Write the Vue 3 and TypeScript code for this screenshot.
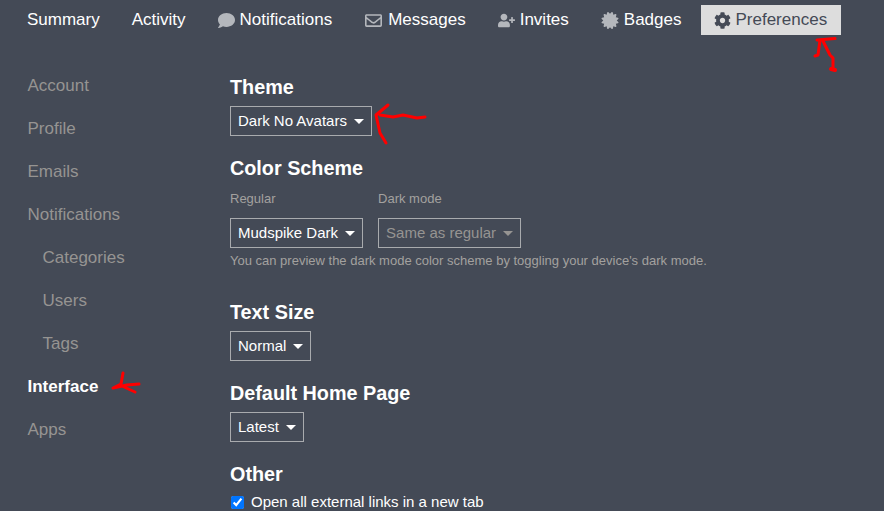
<script setup lang="ts">
interface NavItem {
  label: string;
  icon?: { box: string; width: number; d: string };
  active?: boolean;
}

const navItems: NavItem[] = [
  { label: "Summary" },
  { label: "Activity" },
  {
    label: "Notifications",
    icon: {
      box: "0 0 512 512",
      width: 17,
      d: "M256 32C114.6 32 0 125.1 0 240c0 49.6 21.4 95 57 130.7C44.5 421.1 2.7 466 2.2 466.5c-2.2 2.3-2.8 5.7-1.5 8.7S4.8 480 8 480c66.3 0 116-31.8 140.6-51.4 32.7 12.3 69 19.4 107.4 19.4 141.4 0 256-93.1 256-208S397.4 32 256 32z",
    },
  },
  {
    label: "Messages",
    icon: {
      box: "0 0 512 512",
      width: 19,
      d: "M464 64H48C21.49 64 0 85.49 0 112v288c0 26.51 21.49 48 48 48h416c26.51 0 48-21.49 48-48V112c0-26.51-21.49-48-48-48zm0 48v40.805c-22.422 18.259-58.168 46.651-134.587 106.49-16.841 13.247-50.201 45.072-73.413 44.701-23.208.375-56.579-31.459-73.413-44.701C106.18 199.465 70.425 171.067 48 152.805V112h416zM48 400V214.398c22.914 18.251 55.409 43.862 104.938 82.646 21.857 17.205 60.134 55.186 103.062 54.955 42.717.231 80.509-37.199 103.053-54.947 49.528-38.783 82.032-64.401 104.947-82.653V400H48z",
    },
  },
  {
    label: "Invites",
    icon: {
      box: "0 0 640 512",
      width: 17,
      d: "M624 208h-64v-64c0-8.8-7.2-16-16-16h-32c-8.8 0-16 7.2-16 16v64h-64c-8.8 0-16 7.2-16 16v32c0 8.8 7.2 16 16 16h64v64c0 8.8 7.2 16 16 16h32c8.8 0 16-7.2 16-16v-64h64c8.8 0 16-7.2 16-16v-32c0-8.8-7.2-16-16-16zm-400 48c70.7 0 128-57.3 128-128S294.7 0 224 0 96 57.3 96 128s57.3 128 128 128zm89.6 32h-16.7c-22.2 10.2-46.9 16-72.9 16s-50.6-5.8-72.9-16h-16.7C60.2 288 0 348.2 0 422.4V464c0 26.5 21.5 48 48 48h352c26.5 0 48-21.5 48-48v-41.6c0-74.2-60.2-134.4-134.4-134.4z",
    },
  },
  {
    label: "Badges",
    icon: {
      box: "0 0 512 512",
      width: 18,
      d: "M458.622 255.92l45.985-45.005c13.708-12.977 7.316-36.039-10.664-40.339l-62.65-15.99 17.661-62.015c4.991-17.838-11.829-34.663-29.661-29.671l-61.994 17.667-15.984-62.671C337.085.197 313.765-6.276 300.99 7.228L256 53.57 211.011 7.229c-12.63-13.351-36.047-7.234-40.325 10.668l-15.984 62.671-61.995-17.667C74.87 57.907 58.056 74.738 63.046 92.572l17.661 62.015-62.65 15.99C.069 174.878-6.31 197.944 7.392 210.915l45.985 45.005-45.985 45.004c-13.708 12.977-7.316 36.039 10.664 40.339l62.65 15.99-17.661 62.015c-4.991 17.838 11.829 34.663 29.661 29.671l61.994-17.667 15.984 62.671c4.439 18.575 27.696 24.018 40.325 10.668L256 458.61l44.989 46.001c12.5 13.488 35.987 7.486 40.325-10.668l15.984-62.671 61.994 17.667c17.836 4.994 34.651-11.837 29.661-29.671l-17.661-62.015 62.65-15.99c17.987-4.302 24.366-27.367 10.664-40.339l-45.984-45.004z",
    },
  },
  {
    label: "Preferences",
    active: true,
    icon: {
      box: "0 0 512 512",
      width: 17,
      d: "M487.4 315.7l-42.6-24.6c4.3-23.2 4.3-47 0-70.2l42.6-24.6c4.9-2.8 7.1-8.6 5.5-14-11.1-35.6-30-67.8-54.7-94.6-3.8-4.1-10-5.1-14.8-2.3L380.8 110c-17.9-15.4-38.5-27.3-60.8-35.1V25.8c0-5.6-3.9-10.5-9.4-11.7-36.7-8.2-74.3-7.8-109.2 0-5.5 1.2-9.4 6.1-9.4 11.7V75c-22.2 7.9-42.8 19.8-60.8 35.1L88.7 85.5c-4.9-2.8-11-1.9-14.8 2.3-24.7 26.7-43.6 58.9-54.7 94.6-1.7 5.4.6 11.2 5.5 14L67.3 221c-4.3 23.2-4.3 47 0 70.2l-42.6 24.6c-4.9 2.8-7.1 8.6-5.5 14 11.1 35.6 30 67.8 54.7 94.6 3.8 4.1 10 5.1 14.8 2.3l42.6-24.6c17.9 15.4 38.5 27.3 60.8 35.1v49.2c0 5.6 3.9 10.5 9.4 11.7 36.7 8.2 74.3 7.8 109.2 0 5.5-1.2 9.4-6.1 9.4-11.7v-49.2c22.2-7.9 42.8-19.8 60.8-35.1l42.6 24.6c4.9 2.8 11 1.9 14.8-2.3 24.7-26.7 43.6-58.9 54.7-94.6 1.5-5.5-.7-11.3-5.6-14.1zM256 336c-44.1 0-80-35.9-80-80s35.9-80 80-80 80 35.9 80 80-35.9 80-80 80z",
    },
  },
];

const sideItems = [
  { label: "Account" },
  { label: "Profile" },
  { label: "Emails" },
  { label: "Notifications" },
  { label: "Categories", sub: true },
  { label: "Users", sub: true },
  { label: "Tags", sub: true },
  { label: "Interface", active: true },
  { label: "Apps" },
];
</script>

<template>
  <div class="page">
    <nav class="nav">
      <a
        v-for="item in navItems"
        :key="item.label"
        class="nav-item"
        :class="{ active: item.active }"
      >
        <svg
          v-if="item.icon"
          class="nav-icon"
          :viewBox="item.icon.box"
          :width="item.icon.width"
          height="17"
        >
          <path :d="item.icon.d" fill="currentColor" />
        </svg>
        {{ item.label }}
      </a>
    </nav>

    <div class="body">
      <aside class="side">
        <a
          v-for="item in sideItems"
          :key="item.label"
          class="side-item"
          :class="{ sub: item.sub, active: item.active }"
          >{{ item.label }}</a
        >
      </aside>

      <main class="main">
        <section class="block">
          <h2>Theme</h2>
          <div class="select">Dark No Avatars <i class="caret"></i></div>
        </section>

        <section class="block">
          <h2>Color Scheme</h2>
          <div class="schemes">
            <div>
              <div class="label">Regular</div>
              <div class="select">Mudspike Dark <i class="caret"></i></div>
            </div>
            <div>
              <div class="label">Dark mode</div>
              <div class="select muted">Same as regular <i class="caret"></i></div>
            </div>
          </div>
          <p class="help">You can preview the dark mode color scheme by toggling your device's dark mode.</p>
        </section>

        <section class="block spaced">
          <h2>Text Size</h2>
          <div class="select">Normal <i class="caret"></i></div>
        </section>

        <section class="block">
          <h2>Default Home Page</h2>
          <div class="select">Latest <i class="caret"></i></div>
        </section>

        <section class="block">
          <h2>Other</h2>
          <label class="check">
            <input type="checkbox" checked />
            Open all external links in a new tab
          </label>
        </section>
      </main>
    </div>

    <!-- hand drawn red marks on top of the screenshot -->
    <svg class="marks" width="884" height="511" viewBox="0 0 884 511">
      <g fill="none" stroke="#f00" stroke-width="3" stroke-linecap="round" stroke-linejoin="round">
        <path d="M817 40L835 38.500M820 40L818 55L815 56M823 41L830 55L833 58L833 69" />
        <path d="M831 69L835 70" stroke-width="4" />
        <path d="M388 105L376 115L380 133L386 143M380 115L393 117L403 115L417 118L425 117" />
        <path d="M123 373L121 384L113 388L127 385L139 384M122 386L135 392" />
      </g>
    </svg>
  </div>
</template>

<style>
html,
body {
  background: #444a56;
}
</style>

<style scoped>
.page {
  position: relative;
  width: 884px;
  height: 511px;
  overflow: hidden;
  background: #444a56;
  color: #fff;
  font-family: "Liberation Sans", Arial, sans-serif;
}
.nav {
  display: flex;
  gap: 6px;
  padding: 5px 0 0 14px;
}
.nav-item {
  display: flex;
  align-items: center;
  gap: 5px;
  height: 30px;
  padding: 0 13px;
  font-size: 17px;
  white-space: nowrap;
}
.nav-icon {
  color: #b4b7bc;
  flex: none;
}
.nav-item.active {
  margin-left: 1px;
  gap: 4px;
  padding-right: 14px;
  background: #ddd;
  color: #444a56;
}
.nav-item.active .nav-icon {
  color: #444a56;
}
.body {
  display: flex;
}
.side {
  width: 230px;
  flex: none;
  display: flex;
  flex-direction: column;
  padding: 29px 0 0 27.5px;
  box-sizing: border-box;
}
.side-item {
  height: 43px;
  line-height: 43px;
  font-size: 17px;
  color: #969492;
}
.side-item.sub {
  padding-left: 15px;
}
.side-item.active {
  color: #fff;
  font-weight: 700;
}
.main {
  flex: 1;
  padding-top: 40px;
}
.block {
  margin-bottom: 20px;
}
.block.spaced {
  margin-top: 30px;
}
h2 {
  margin: 0 0 7px;
  font-size: 19.8px;
  line-height: 24px;
  font-weight: 700;
}
.select {
  display: inline-flex;
  align-items: center;
  gap: 7px;
  height: 30px;
  box-sizing: border-box;
  padding: 0 7px 2px;
  border: 1px solid #a9abae;
  font-size: 15px;
  vertical-align: top;
  white-space: nowrap;
}
.select.muted {
  color: #969492;
}
.caret {
  width: 0;
  height: 0;
  border-left: 5px solid transparent;
  border-right: 5px solid transparent;
  border-top: 5px solid currentColor;
  margin: 3px 0 0 0;
}
.schemes {
  display: flex;
  gap: 15px;
}
.schemes > div {
  display: flex;
  flex-direction: column;
  align-items: flex-start;
}
.label {
  font-size: 13px;
  line-height: 18px;
  color: #a3a19f;
  margin: 3px 0 10px;
}
.help {
  margin: 4px 0 0;
  font-size: 13px;
  line-height: 18px;
  color: #a3a19f;
}
.check {
  display: flex;
  align-items: center;
  gap: 7px;
  font-size: 15px;
  line-height: 18px;
  margin-top: 1px;
}
.check input {
  margin: 0 0 0 1px;
  width: 13px;
  height: 13px;
  accent-color: #0075ff;
}
.marks {
  position: absolute;
  top: 0;
  left: 0;
  pointer-events: none;
}
</style>
